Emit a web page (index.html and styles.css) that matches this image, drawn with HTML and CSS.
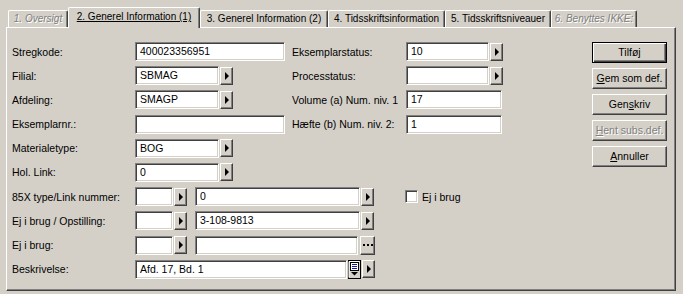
FILE: index.html
```html
<!DOCTYPE html>
<html>
<head>
<meta charset="utf-8">
<link rel="stylesheet" href="styles.css">
</head>
<body>
<div class="window">
  <div class="tabs">
    <div class="tab disabled t1">1. Oversigt</div>
    <div class="tab active t2"><u>2. Generel Information (1)</u></div>
    <div class="tab t3">3. Generel Information (2)</div>
    <div class="tab t4">4. Tidsskriftsinformation</div>
    <div class="tab t5">5. Tidsskriftsniveauer</div>
    <div class="tab disabled t6">6. Benyttes IKKE:</div>
  </div>
  <div class="panel">
    <div class="form">
      <div class="lbl">Stregkode:</div>
      <div class="field"><div class="in w150">400023356951</div></div>
      <div class="lbl r">Eksemplarstatus:</div>
      <div class="field"><div class="in w83">10</div><div class="arr"></div></div>

      <div class="lbl">Filial:</div>
      <div class="field"><div class="in w84">SBMAG</div><div class="arr"></div></div>
      <div class="lbl r">Processtatus:</div>
      <div class="field"><div class="in w83"></div><div class="arr"></div></div>

      <div class="lbl">Afdeling:</div>
      <div class="field"><div class="in w84">SMAGP</div><div class="arr"></div></div>
      <div class="lbl r">Volume (a) Num. niv. 1</div>
      <div class="field"><div class="in w96">17</div></div>

      <div class="lbl">Eksemplarnr.:</div>
      <div class="field"><div class="in w150"></div></div>
      <div class="lbl r">Hæfte (b) Num. niv. 2:</div>
      <div class="field"><div class="in w96">1</div></div>

      <div class="lbl">Materialetype:</div>
      <div class="field"><div class="in w84">BOG</div><div class="arr"></div></div>
      <div class="empty"></div><div class="empty"></div>

      <div class="lbl">Hol. Link:</div>
      <div class="field"><div class="in w84">0</div><div class="arr"></div></div>
      <div class="empty"></div><div class="empty"></div>

      <div class="lbl">85X type/Link nummer:</div>
      <div class="field wide"><div class="in w38"></div><div class="arr"></div><div class="in w165 sep">0</div><div class="arr"></div></div>
      <div class="check"><div class="cb"></div><span>Ej i brug</span></div>

      <div class="lbl">Ej i brug / Opstilling:</div>
      <div class="field wide"><div class="in w38"></div><div class="arr"></div><div class="in w165 sep">3-108-9813</div><div class="arr"></div></div>
      <div class="empty"></div>

      <div class="lbl">Ej i brug:</div>
      <div class="field wide"><div class="in w38"></div><div class="arr"></div><div class="in w163 sep"></div><div class="dots"></div></div>
      <div class="empty"></div>

      <div class="lbl">Beskrivelse:</div>
      <div class="field wide"><div class="in w212">Afd. 17, Bd. 1</div><div class="memo"><svg width="13" height="19" viewBox="0 0 13 19"><rect x="0.5" y="0.5" width="12" height="18" fill="#d4d0c8" stroke="#000"/><path d="M1 17.5V1.5H11.5" stroke="#fff" fill="none"/><rect x="2.5" y="2.5" width="8" height="8" fill="#fff" stroke="#000"/><rect x="4" y="4" width="5" height="1" fill="#1a1aa0"/><rect x="4" y="6" width="5" height="1" fill="#1a1aa0"/><rect x="4" y="8" width="5" height="1" fill="#1a1aa0"/><polygon points="3,12 10,12 6.5,15.5" fill="#000"/></svg></div><div class="arr"></div></div>
      <div class="empty"></div>
    </div>
    <div class="buttons">
      <div class="btn default">Tilfø<u>j</u></div>
      <div class="btn"><u>G</u>em som def.</div>
      <div class="btn">Gen<u>s</u>kriv</div>
      <div class="btn off"><u>H</u>ent subs.def.</div>
      <div class="btn"><u>A</u>nnuller</div>
    </div>
  </div>
</div>
</body>
</html>
```

FILE: styles.css
```css
* { box-sizing: border-box; }
html, body { margin: 0; padding: 0; }
body {
  background: #d4d0c8;
  font-family: "Liberation Sans", Arial, sans-serif;
  font-size: 10.5px;
  color: #000;
  width: 683px;
  height: 294px;
  overflow: hidden;
}
.window { padding: 7px 0 0 6px; }

.tabs {
  display: flex;
  align-items: flex-end;
  height: 20px;
  padding-left: 2px;
  font-size: 10px;
}
.tab {
  height: 17px;
  border: 1px solid;
  border-bottom: 0;
  border-color: #fff #404040 #fff #fff;
  box-shadow: inset -1px 0 #808080;
  border-radius: 2px 2px 0 0;
  text-align: center;
  line-height: 15px;
  white-space: nowrap;
  background: #d4d0c8;
}
.tab.active {
  height: 21px;
  margin-bottom: -1px;
  line-height: 18px;
  position: relative;
  z-index: 1;
}
.disabled {
  color: #808080;
  text-shadow: 1px 1px 0 #fff;
  font-style: italic;
}
.t1 { width: 60px; }
.t2 { width: 132px; }
.t3 { width: 128px; }
.t4 { width: 117px; }
.t5 { width: 106px; }
.t6 { width: 86px; }

.panel {
  width: 670px;
  height: 264px;
  border: 1px solid;
  border-color: #fff #404040 #404040 #fff;
  box-shadow: inset -1px -1px #808080;
  display: flex;
  align-items: flex-start;
}

.form {
  display: grid;
  grid-template-columns: 123px 155px 116px 97px;
  grid-template-rows: repeat(10, 19px);
  row-gap: 5.2px;
  margin: 14px 0 0 5px;
}
.lbl {
  align-self: center;
  white-space: nowrap;
}
.lbl.r { padding-left: 2px; }
.field {
  display: flex;
  align-items: center;
  gap: 1px;
}
.field.wide { grid-column: 2 / 4; }

.in {
  height: 19px;
  background: #fff;
  border: 1px solid;
  border-color: #808080 #fff #fff #808080;
  box-shadow: inset 1px 1px #404040, inset -1px -1px #d4d0c8;
  padding-left: 4px;
  line-height: 17px;
  white-space: nowrap;
  overflow: hidden;
}
.w150 { width: 150px; }
.w84 { width: 84px; }
.w83 { width: 83px; }
.w96 { width: 96px; }
.w38 { width: 38px; }
.w165 { width: 165px; }
.w163 { width: 163px; }
.w212 { width: 212px; }
.sep { margin-left: 7px; }

.arr {
  width: 13px;
  height: 18px;
  border: 1px solid;
  border-color: #fff #404040 #404040 #fff;
  box-shadow: inset -1px -1px #808080;
  display: flex;
  align-items: center;
  justify-content: center;
  flex: none;
}
.arr::before {
  content: "";
  border-left: 4px solid #000;
  border-top: 4px solid transparent;
  border-bottom: 4px solid transparent;
  margin-left: 1px;
}
.dots {
  width: 15px;
  height: 19px;
  margin-left: 1px;
  border: 1px solid;
  border-color: #fff #404040 #404040 #fff;
  box-shadow: inset -1px -1px #808080;
  display: flex;
  align-items: center;
  justify-content: flex-start;
  padding-left: 2px;
  flex: none;
}
.dots::before {
  content: "";
  width: 2px;
  height: 2px;
  background: #000;
  box-shadow: 4px 0 #000, 8px 0 #000;
}
.memo { width: 13px; height: 19px; flex: none; }
.memo svg { display: block; }

.check {
  display: flex;
  align-items: center;
  gap: 4px;
  margin-left: -1px;
}
.cb {
  width: 13px;
  height: 13px;
  background: #fff;
  border: 1px solid;
  border-color: #808080 #fff #fff #808080;
  box-shadow: inset 1px 1px #404040, inset -1px -1px #d4d0c8;
}

.buttons {
  margin: 14px 8px 0 auto;
  display: flex;
  flex-direction: column;
  gap: 5px;
}
.btn {
  width: 75px;
  height: 21px;
  border: 1px solid;
  border-color: #fff #404040 #404040 #fff;
  box-shadow: inset -1px -1px #808080;
  text-align: center;
  line-height: 18px;
  white-space: nowrap;
}
.btn.default {
  border-color: #000;
  box-shadow: inset 1px 1px #fff, inset -1px -1px #404040, inset -2px -2px #808080;
}
.btn.off {
  color: #808080;
  text-shadow: 1px 1px 0 #fff;
}
```
